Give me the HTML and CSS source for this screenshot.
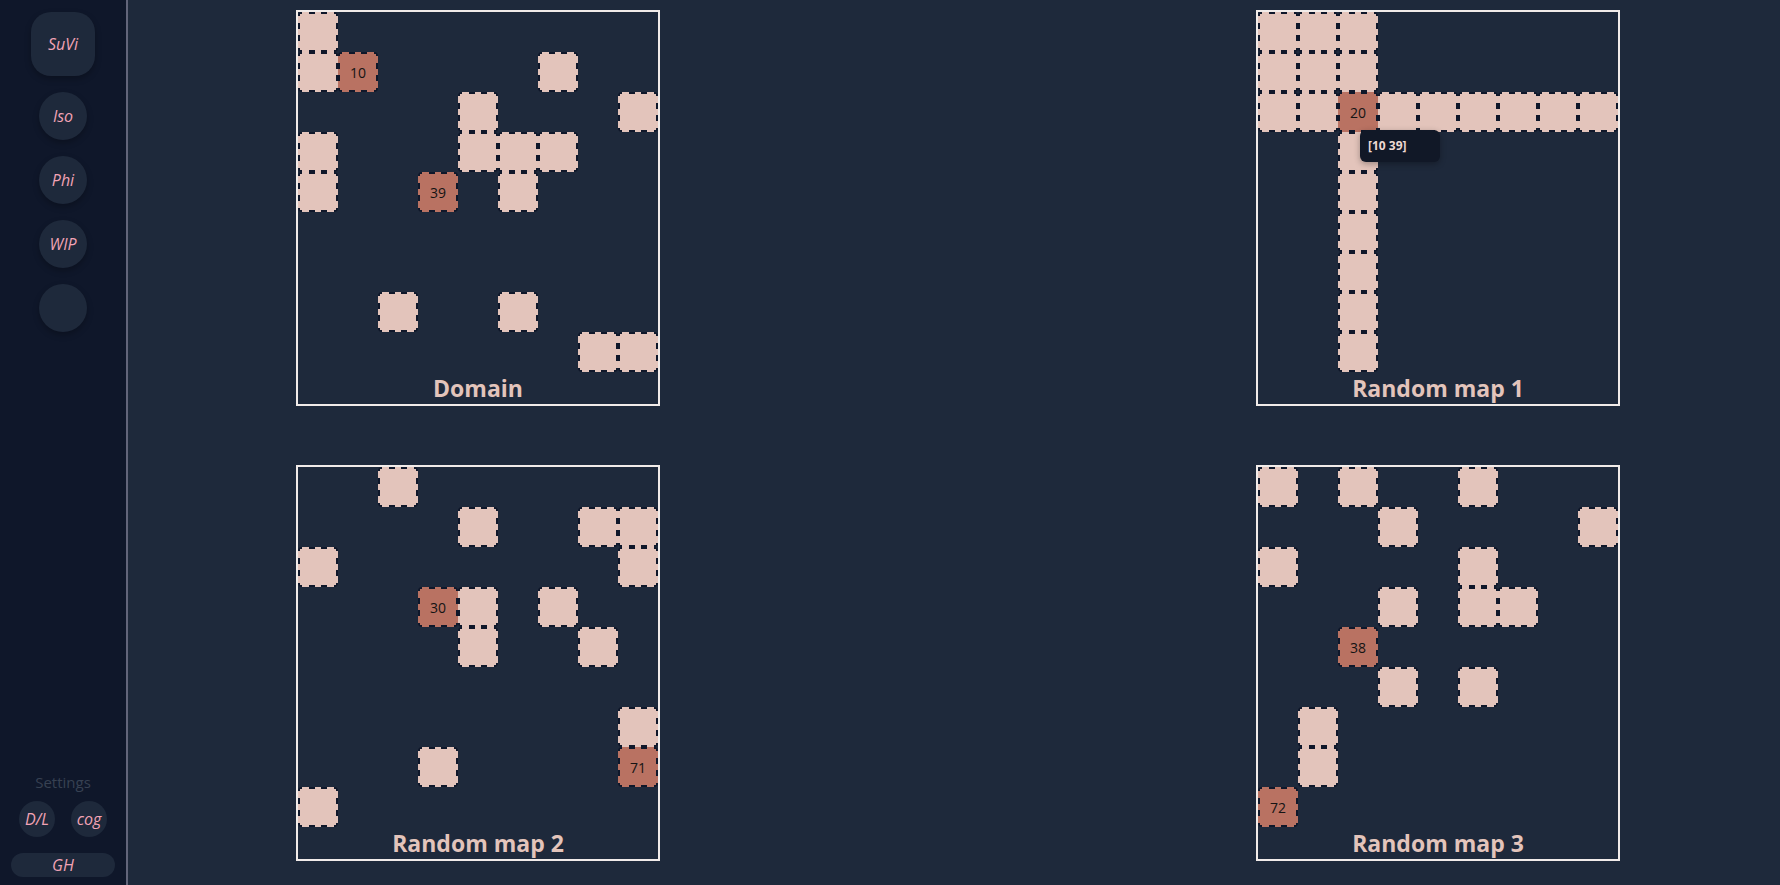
FILE: index.html
```html
<!DOCTYPE html>
<html>
<head>
<meta charset="utf-8">
<link rel="stylesheet" href="styles.css">
</head>
<body>
<nav class="sidebar">
  <div class="nav-top">
    <div class="nav-btn nav-main">SuVi</div>
    <div class="nav-btn">Iso</div>
    <div class="nav-btn">Phi</div>
    <div class="nav-btn">WIP</div>
    <div class="nav-btn"></div>
  </div>
  <div class="nav-bottom">
    <div class="settings-label">Settings</div>
    <div class="settings-row">
      <div class="small-btn">D/L</div>
      <div class="small-btn">cog</div>
    </div>
    <div class="gh-btn">GH</div>
  </div>
</nav>
<main class="main">
  <section class="map">
    <div class="grid">
      <div class="cell" style="grid-area:1/1"></div>
      <div class="cell" style="grid-area:2/1"></div>
      <div class="cell sel" style="grid-area:2/2">10</div>
      <div class="cell" style="grid-area:2/7"></div>
      <div class="cell" style="grid-area:3/5"></div>
      <div class="cell" style="grid-area:3/9"></div>
      <div class="cell" style="grid-area:4/1"></div>
      <div class="cell" style="grid-area:4/5"></div>
      <div class="cell" style="grid-area:4/6"></div>
      <div class="cell" style="grid-area:4/7"></div>
      <div class="cell" style="grid-area:5/1"></div>
      <div class="cell sel" style="grid-area:5/4">39</div>
      <div class="cell" style="grid-area:5/6"></div>
      <div class="cell" style="grid-area:8/3"></div>
      <div class="cell" style="grid-area:8/6"></div>
      <div class="cell" style="grid-area:9/8"></div>
      <div class="cell" style="grid-area:9/9"></div>
    </div>
    <div class="map-title">Domain</div>
  </section>
  <section class="map">
    <div class="grid">
      <div class="cell" style="grid-area:1/1"></div>
      <div class="cell" style="grid-area:1/2"></div>
      <div class="cell" style="grid-area:1/3"></div>
      <div class="cell" style="grid-area:2/1"></div>
      <div class="cell" style="grid-area:2/2"></div>
      <div class="cell" style="grid-area:2/3"></div>
      <div class="cell" style="grid-area:3/1"></div>
      <div class="cell" style="grid-area:3/2"></div>
      <div class="cell sel" style="grid-area:3/3">20</div>
      <div class="cell" style="grid-area:3/4"></div>
      <div class="cell" style="grid-area:3/5"></div>
      <div class="cell" style="grid-area:3/6"></div>
      <div class="cell" style="grid-area:3/7"></div>
      <div class="cell" style="grid-area:3/8"></div>
      <div class="cell" style="grid-area:3/9"></div>
      <div class="cell" style="grid-area:4/3"></div>
      <div class="cell" style="grid-area:5/3"></div>
      <div class="cell" style="grid-area:6/3"></div>
      <div class="cell" style="grid-area:7/3"></div>
      <div class="cell" style="grid-area:8/3"></div>
      <div class="cell" style="grid-area:9/3"></div>
    </div>
    <div class="map-title">Random map 1</div>
    <div class="tooltip">[10 39]</div>
  </section>
  <section class="map">
    <div class="grid">
      <div class="cell" style="grid-area:1/3"></div>
      <div class="cell" style="grid-area:2/5"></div>
      <div class="cell" style="grid-area:2/8"></div>
      <div class="cell" style="grid-area:2/9"></div>
      <div class="cell" style="grid-area:3/1"></div>
      <div class="cell" style="grid-area:3/9"></div>
      <div class="cell sel" style="grid-area:4/4">30</div>
      <div class="cell" style="grid-area:4/5"></div>
      <div class="cell" style="grid-area:4/7"></div>
      <div class="cell" style="grid-area:5/5"></div>
      <div class="cell" style="grid-area:5/8"></div>
      <div class="cell" style="grid-area:7/9"></div>
      <div class="cell" style="grid-area:8/4"></div>
      <div class="cell sel" style="grid-area:8/9">71</div>
      <div class="cell" style="grid-area:9/1"></div>
    </div>
    <div class="map-title">Random map 2</div>
  </section>
  <section class="map">
    <div class="grid">
      <div class="cell" style="grid-area:1/1"></div>
      <div class="cell" style="grid-area:1/3"></div>
      <div class="cell" style="grid-area:1/6"></div>
      <div class="cell" style="grid-area:2/4"></div>
      <div class="cell" style="grid-area:2/9"></div>
      <div class="cell" style="grid-area:3/1"></div>
      <div class="cell" style="grid-area:3/6"></div>
      <div class="cell" style="grid-area:4/4"></div>
      <div class="cell" style="grid-area:4/6"></div>
      <div class="cell" style="grid-area:4/7"></div>
      <div class="cell sel" style="grid-area:5/3">38</div>
      <div class="cell" style="grid-area:6/4"></div>
      <div class="cell" style="grid-area:6/6"></div>
      <div class="cell" style="grid-area:7/2"></div>
      <div class="cell" style="grid-area:8/2"></div>
      <div class="cell sel" style="grid-area:9/1">72</div>
    </div>
    <div class="map-title">Random map 3</div>
  </section>
</main>
</body>
</html>
```

FILE: styles.css
```css
* { box-sizing: border-box; }
html, body {
  margin: 0;
  height: 100%;
}
body {
  display: flex;
  background: #1e293b;
  font-family: "Open Sans", "Liberation Sans", sans-serif;
  overflow: hidden;
}
.sidebar {
  width: 128px;
  height: 885px;
  flex: none;
  background: #0f172a;
  border-right: 2px solid #62657a;
  display: flex;
  flex-direction: column;
  justify-content: space-between;
  align-items: center;
  padding: 12px 0 8px;
}
.nav-top {
  display: flex;
  flex-direction: column;
  align-items: center;
  gap: 16px;
}
.nav-btn {
  width: 48px;
  height: 48px;
  border-radius: 50%;
  background: #1e293b;
  color: #f2a3b5;
  font-style: italic;
  font-size: 16px;
  display: flex;
  align-items: center;
  justify-content: center;
  box-shadow: 0 3px 6px rgba(0, 0, 0, 0.25);
}
.nav-btn.nav-main {
  width: 64px;
  height: 64px;
  border-radius: 20px;
}
.nav-bottom {
  display: flex;
  flex-direction: column;
  align-items: center;
}
.settings-label {
  color: #374152;
  font-size: 15px;
  line-height: 20px;
  margin-bottom: 9px;
}
.settings-row {
  display: flex;
  gap: 16px;
  margin-bottom: 16px;
}
.small-btn {
  width: 36px;
  height: 36px;
  border-radius: 50%;
  background: #1e293b;
  color: #f2a3b5;
  font-style: italic;
  font-size: 16px;
  display: flex;
  align-items: center;
  justify-content: center;
}
.gh-btn {
  width: 104px;
  height: 24px;
  border-radius: 12px;
  background: #1e293b;
  color: #f2a3b5;
  font-style: italic;
  font-size: 16px;
  display: flex;
  align-items: center;
  justify-content: center;
}
.main {
  flex: 1;
  display: grid;
  grid-template-columns: 364px 364px;
  grid-auto-rows: 396px;
  column-gap: 596px;
  row-gap: 59px;
  padding: 10px 0 0 168px;
  align-content: start;
}
.map {
  position: relative;
  border: 2px solid #f1ebe9;
  display: flex;
  flex-direction: column;
}
.grid {
  display: grid;
  grid-template-columns: repeat(9, 40px);
  grid-template-rows: repeat(9, 40px);
}
.cell {
  --d: #0f172a;
  --fill: #e3c4bb;
  --dash: var(--d) 0 4px, transparent 4px 11px, var(--d) 11px 17px, transparent 17px 23px, var(--d) 23px 29px, transparent 29px 36px, var(--d) 36px 40px;
  background:
    linear-gradient(90deg, var(--dash)) left top / 100% 2px no-repeat,
    linear-gradient(90deg, var(--dash)) left bottom / 100% 2px no-repeat,
    linear-gradient(180deg, var(--dash)) left top / 2px 100% no-repeat,
    linear-gradient(180deg, var(--dash)) right top / 2px 100% no-repeat,
    var(--fill);
  border-radius: 4px;
  color: #141414;
  font-size: 14px;
  display: flex;
  align-items: center;
  justify-content: center;
}
.cell.sel {
  --fill: #b97262;
}
.map-title {
  height: 32px;
  line-height: 32px;
  text-align: center;
  font-size: 23px;
  font-weight: 700;
  color: #e3c4bb;
}
.tooltip {
  position: absolute;
  left: 102px;
  top: 118px;
  width: 80px;
  height: 32px;
  padding: 0 8px;
  background: #111827;
  border-radius: 6px;
  color: #eed9d3;
  font-size: 12px;
  font-weight: 700;
  line-height: 32px;
  box-shadow: 0 2px 6px rgba(0, 0, 0, 0.3);
}
```
